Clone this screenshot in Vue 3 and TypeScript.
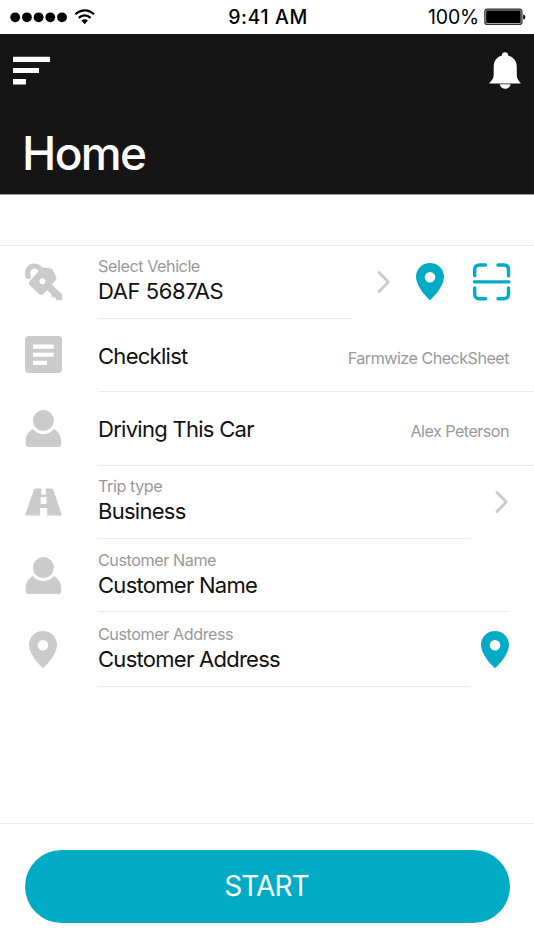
<script setup lang="ts">
type IconName = 'keys' | 'list' | 'person' | 'road' | 'pin'

interface Row {
  id: string
  icon: IconName
  label?: string
  title: string
  value?: string
  tools: string[]
}

const rows: Row[] = [
  { id: 'vehicle', icon: 'keys', label: 'Select Vehicle', title: 'DAF 5687AS', tools: ['chevron', 'pin', 'scan'] },
  { id: 'checklist', icon: 'list', title: 'Checklist', value: 'Farmwize CheckSheet', tools: [] },
  { id: 'driver', icon: 'person', title: 'Driving This Car', value: 'Alex Peterson', tools: [] },
  { id: 'trip', icon: 'road', label: 'Trip type', title: 'Business', tools: ['chevron'] },
  { id: 'name', icon: 'person', label: 'Customer Name', title: 'Customer Name', tools: [] },
  { id: 'address', icon: 'pin', label: 'Customer Address', title: 'Customer Address', tools: ['pin'] },
]

const pinPath =
  'M14 0C6.2 0 0 6.1 0 13.8C0 20.5 5.5 29.5 14 37.2C22.5 29.5 28 20.5 28 13.8C28 6.1 21.8 0 14 0ZM14 8.9A5.3 5.3 0 1 1 14 19.5A5.3 5.3 0 1 1 14 8.9Z'
</script>

<template>
  <main class="screen">
    <div class="status">
      <div class="signal">
        <svg width="86" height="18" viewBox="0 0 86 18">
          <circle v-for="n in 5" :key="n" :cx="5.2 + (n - 1) * 11.7" cy="9.3" r="4.9" />
          <g fill="none" stroke="#000" stroke-width="2.2">
            <path d="M65.4 6.3C70.8 1 78.6 1 84 6.3" />
            <path d="M68.8 9.9C72.3 6.5 77.1 6.5 80.6 9.9" />
          </g>
          <path d="M71.4 12.5C73.3 10.7 76.1 10.7 78 12.5L74.7 16.2Z" />
        </svg>
      </div>
      <div class="clock">9:41 AM</div>
      <div class="power">
        <span class="percent">100%</span>
        <svg width="42" height="18" viewBox="0 0 42 18">
          <rect x="0.8" y="1.1" width="37.2" height="15.4" rx="2.6" fill="#aaa" stroke="#333" stroke-width="1.1" />
          <rect x="2.2" y="2.5" width="34.4" height="12.6" rx="1.2" />
          <path d="M39.2 6.4C42 7 42 11 39.2 11.6Z" />
        </svg>
      </div>
    </div>

    <header class="header">
      <div class="bar">
        <svg width="38" height="30" viewBox="0 0 38 30" fill="#fff">
          <path d="M0 .7H37V6H0ZM0 12H26V17H0ZM0 23H13V28.4H0Z" />
        </svg>
        <svg width="32" height="38" viewBox="0 0 32 38" fill="#fff">
          <path d="M0 31.5C3.4 27.6 4.7 26.2 4.7 22.5V14.8C4.7 9 7.8 4.8 12.8 3.4C12.8 -.9 19.2 -.9 19.2 3.4C24.2 4.8 27.8 9 27.8 14.8V22.5C27.8 26.2 28.8 27.6 32 31.5Z" />
          <path d="M10.8 32.2H21.6C20.4 38.2 12 38.2 10.8 32.2Z" />
        </svg>
      </div>
      <h1 class="heading">Home</h1>
    </header>

    <section class="list">
      <div v-for="row in rows" :key="row.id" class="row" :class="'row-' + row.id">
        <div class="lead">
          <svg v-if="row.icon === 'keys'" width="37" height="38" viewBox="0 0 37 38">
            <path d="M3.3 13.6C1.2 8.4 4 3 9 3C12.6 3 15.2 5 16.8 8.6" fill="none" stroke="#cbcbcb" stroke-width="5.2" />
            <circle cx="3.2" cy="13.2" r="2.7" />
            <path fill-rule="evenodd" d="M18.8 4.6L25.6 5.6Q27.4 5.9 28 7.4L31.2 14.2Q31.9 16 30.5 17.6L26.8 21.4L37 31.2V37.3H31.3L30.3 34.4H27.3L26.2 31.2L22.4 27.2L18.4 31Q16 33 13.6 30.8L4.8 22.3Q2.8 20.2 4.8 18L15.8 5.8Q17.2 4.4 18.8 4.6ZM17.4 15.2A3 3 0 1 0 17.4 21.2A3 3 0 1 0 17.4 15.2Z" />
          </svg>
          <svg v-else-if="row.icon === 'list'" width="37" height="37" viewBox="0 0 37 37">
            <path fill-rule="evenodd" d="M4 0H33Q37 0 37 4V33Q37 37 33 37H4Q0 37 0 33V4Q0 0 4 0ZM8 8.5V12.7H28.7V8.5ZM8 16.7V20.8H28.7V16.7ZM8 24.8V28.9H22V24.8Z" />
          </svg>
          <svg v-else-if="row.icon === 'person'" width="37" height="38" viewBox="0 0 37 38">
            <circle cx="18.4" cy="10.6" r="10.5" />
            <path d="M7.8 19.1C13.4 26 23.4 26 29 19.1C33.8 21.9 36.2 26.3 36.2 31.7V33.8Q36.2 37 33 37H3.8Q.6 37 .6 33.8V31.7C.6 26.3 3 21.9 7.8 19.1Z" />
          </svg>
          <svg v-else-if="row.icon === 'road'" width="37" height="28" viewBox="0 0 37 28">
            <path fill-rule="evenodd" d="M11.3 .5H26.2Q27.8 .5 28.4 2L37 27.4H22.2V20H14.9V27.4H0L8.8 2Q9.4 .5 11.3 .5ZM16.3 .5V6.4H20.8V.5ZM15.7 9.1V16H21.5V9.1Z" />
          </svg>
          <svg v-else width="28" height="38" viewBox="0 0 28 38"><path fill-rule="evenodd" :d="pinPath" /></svg>
        </div>
        <div class="content">
          <div class="texts" :class="{ double: row.label }">
            <span v-if="row.label" class="label">{{ row.label }}</span>
            <span class="title">{{ row.title }}</span>
          </div>
          <span v-if="row.value" class="value">{{ row.value }}</span>
        </div>
        <div class="tools">
          <template v-for="tool in row.tools" :key="tool">
            <svg v-if="tool === 'chevron'" class="chevron" width="14" height="24" viewBox="0 0 14 24">
              <path d="M2 2.4L11.3 11.9L2 21.4" fill="none" stroke="#cbcbcb" stroke-width="2.8" stroke-linecap="round" stroke-linejoin="round" />
            </svg>
            <svg v-else-if="tool === 'pin'" class="teal" width="28" height="38" viewBox="0 0 28 38">
              <path fill-rule="evenodd" :d="pinPath" />
            </svg>
            <svg v-else class="scan" width="38" height="38" viewBox="0 0 38 38" fill="none" stroke="#00abc6" stroke-width="3.4" stroke-linecap="round">
              <path d="M1.7 12.8V6.7Q1.7 2 6.4 2H12.6M25 2H30.8Q35.5 2 35.5 6.7V12.8M35.5 25V31Q35.5 35.7 30.8 35.7H25M12.6 35.7H6.4Q1.7 35.7 1.7 31V25M1.5 18.9H35.8" />
            </svg>
          </template>
        </div>
      </div>
    </section>

    <footer class="footer">
      <button class="start" type="button">START</button>
    </footer>
  </main>
</template>

<style>
body {
  margin: 0;
  background: #fff;
}
</style>

<style scoped>
.screen {
  display: flex;
  flex-direction: column;
  width: 534px;
  height: 950px;
  overflow: hidden;
  background: #fff;
  color: #111;
  font-family: Inter, 'Liberation Sans', sans-serif;
  white-space: nowrap;
}
svg {
  display: block;
  flex: none;
}
.status {
  display: grid;
  grid-template-columns: 1fr auto 1fr;
  align-items: center;
  box-sizing: border-box;
  height: 34px;
  padding: 0 8px 0 10px;
  color: #000;
  font-size: 19.5px;
}
.clock {
  font-weight: 550;
  letter-spacing: 0.6px;
}
.power {
  display: flex;
  align-items: center;
  justify-content: flex-end;
  gap: 5px;
}
.percent {
  letter-spacing: -0.2px;
}
.header {
  box-sizing: border-box;
  height: 160px;
  padding: 18px 13px 0;
  background: #151515;
  color: #fff;
  box-shadow: 0 1px 0 #999;
}
.bar {
  display: flex;
  align-items: center;
  justify-content: space-between;
  height: 38px;
}
.heading {
  margin: 35px 0 0 9px;
  font-size: 46px;
  font-weight: 450;
  line-height: 56px;
  letter-spacing: -1.6px;
}
.list {
  display: grid;
  grid-template-rows: 73px 73px 74px 73px 73px 75px;
  margin-top: 51px;
  border-top: 1px solid #ebebeb;
}
.row {
  display: flex;
}
.lead {
  display: flex;
  align-items: center;
  justify-content: center;
  box-sizing: border-box;
  width: 98px;
  padding: 0 36px 0 24px;
  fill: #cbcbcb;
}
.content {
  display: flex;
  flex: 1;
  align-items: center;
  justify-content: space-between;
  border-bottom: 1px solid #ebebeb;
}
.texts {
  display: flex;
  flex-direction: column;
  padding-top: 2px;
}
.row-driver .texts {
  padding-top: 0;
}
.texts.double {
  padding: 0 0 1px;
}
.row-vehicle .texts.double,
.row-trip .texts.double {
  padding-bottom: 3px;
}
.label {
  color: #999;
  font-size: 16.2px;
  line-height: 21px;
  letter-spacing: -0.45px;
}
.title {
  font-size: 22px;
  line-height: 28px;
  letter-spacing: -0.72px;
}
.row-vehicle .title {
  letter-spacing: -0.42px;
}
.value {
  padding: 5px 25px 0 0;
  color: #999;
  font-size: 16.2px;
  letter-spacing: -0.55px;
}
.tools {
  display: flex;
  align-items: center;
  justify-content: flex-end;
  box-sizing: border-box;
}
.row-vehicle .lead,
.row-checklist .lead,
.row-trip .lead,
.row-vehicle .tools,
.row-trip .tools {
  padding-bottom: 2px;
}
.teal {
  fill: #00abc6;
}
.row-vehicle .tools {
  width: 182px;
  padding-right: 23px;
}
.row-vehicle .chevron {
  margin-right: 25px;
}
.row-vehicle .teal {
  margin-right: 29px;
}
.row-trip .tools,
.row-address .tools {
  width: 64px;
  padding-right: 25px;
}
.row-name .tools {
  width: 25px;
}
.footer {
  box-sizing: border-box;
  height: 127px;
  margin-top: auto;
  padding: 26px 24px 0 25px;
  border-top: 1px solid #ebebeb;
}
.start {
  display: block;
  width: 100%;
  height: 73px;
  padding: 0 2px 1px 0;
  border: 0;
  border-radius: 37px;
  background: #00abc6;
  color: #fff;
  font: inherit;
  font-size: 28px;
  letter-spacing: -0.9px;
}
</style>
